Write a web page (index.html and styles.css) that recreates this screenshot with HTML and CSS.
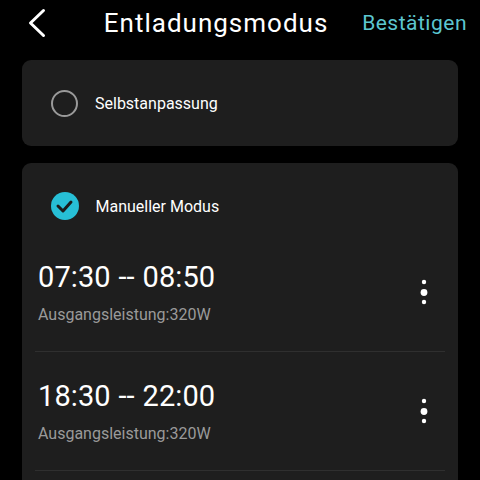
FILE: index.html
```html
<!DOCTYPE html>
<html lang="de">
<head>
<meta charset="utf-8">
<link rel="stylesheet" href="styles.css">
</head>
<body>
<div class="screen">
  <header class="topbar">
    <div class="back">
      <svg width="20" height="30" viewBox="0 0 20 30"><path d="M16.5 2.5 L3.5 15 L16.5 27.5" fill="none" stroke="#fff" stroke-width="3" stroke-linecap="round" stroke-linejoin="round"/></svg>
    </div>
    <div class="title">Entladungsmodus</div>
    <div class="confirm">Bestätigen</div>
  </header>

  <section class="card card-auto">
    <div class="option">
      <span class="radio"></span>
      <span class="option-label">Selbstanpassung</span>
    </div>
  </section>

  <section class="card card-manual">
    <div class="option">
      <svg class="check" width="28" height="28" viewBox="0 0 28 28"><circle cx="14" cy="14" r="14" fill="#27bfd6"/><path d="M7 14 L12 19 L20 10" fill="none" stroke="#1b1b1b" stroke-width="3" stroke-linecap="round" stroke-linejoin="round"/></svg>
      <span class="option-label">Manueller Modus</span>
    </div>
    <div class="slots">
      <div class="slot">
        <div class="slot-info">
          <div class="slot-time">07:30 -- 08:50</div>
          <div class="slot-power">Ausgangsleistung:320W</div>
        </div>
        <svg class="more" width="10" height="28" viewBox="0 0 10 28"><circle cx="5" cy="4" r="2.2" fill="#fff"/><circle cx="5" cy="14.5" r="3.4" fill="#fff"/><circle cx="5" cy="24" r="2.2" fill="#fff"/></svg>
      </div>
      <div class="slot">
        <div class="slot-info">
          <div class="slot-time">18:30 -- 22:00</div>
          <div class="slot-power">Ausgangsleistung:320W</div>
        </div>
        <svg class="more" width="10" height="28" viewBox="0 0 10 28"><circle cx="5" cy="4" r="2.2" fill="#fff"/><circle cx="5" cy="14.5" r="3.4" fill="#fff"/><circle cx="5" cy="24" r="2.2" fill="#fff"/></svg>
      </div>
    </div>
  </section>
</div>
</body>
</html>
```

FILE: styles.css
```css
html, body {
  margin: 0;
  padding: 0;
  background: #000;
}
body {
  font-family: Roboto, "Noto Sans", "Liberation Sans", sans-serif;
  color: #fff;
  width: 480px;
  height: 480px;
  overflow: hidden;
}
.screen {
  display: flex;
  flex-direction: column;
  height: 480px;
  overflow: hidden;
}
.topbar {
  display: flex;
  align-items: center;
  flex-shrink: 0;
  height: 46px;
  padding: 0 13px 0 27px;
  margin-bottom: 14px;
}
.back {
  width: 43px;
  height: 30px;
  display: flex;
  align-items: center;
}
.title {
  flex: 1;
  text-align: center;
  font-size: 26px;
  font-weight: 400;
  letter-spacing: 1px;
}
.confirm {
  font-size: 21px;
  letter-spacing: 0.5px;
  color: #5cc6d0;
}
.card {
  margin: 0 22px;
  background: #1e1e1e;
  border-radius: 9px;
  flex-shrink: 0;
}
.card-auto {
  height: 86px;
  display: flex;
  align-items: center;
  margin-bottom: 17px;
}
.option {
  display: flex;
  align-items: center;
  padding-left: 29px;
  height: 28px;
}
.card-manual {
  flex: 1 0 auto;
  border-radius: 9px 9px 0 0;
}
.card-manual .option {
  padding-top: 29px;
  margin-bottom: 13px;
}
.radio {
  box-sizing: border-box;
  width: 27px;
  height: 27px;
  border: 2.5px solid #9a9a9a;
  border-radius: 50%;
}
.check {
  display: block;
  margin-left: -0.5px;
}
.option-label {
  margin-left: 17px;
  font-size: 16px;
}
.slots {
  margin: 0 13px;
}
.slot {
  display: flex;
  align-items: center;
  justify-content: space-between;
  height: 118px;
  border-bottom: 1px solid #2f2f2f;
  padding: 0 16px 0 3px;
}
.slot-time {
  font-size: 29px;
  line-height: 34px;
  letter-spacing: 0.1px;
  word-spacing: 0.5px;
}
.slot-power {
  margin-top: 12px;
  font-size: 16px;
  line-height: 18px;
  color: #9a9a9a;
}
.more {
  display: block;
}
```
